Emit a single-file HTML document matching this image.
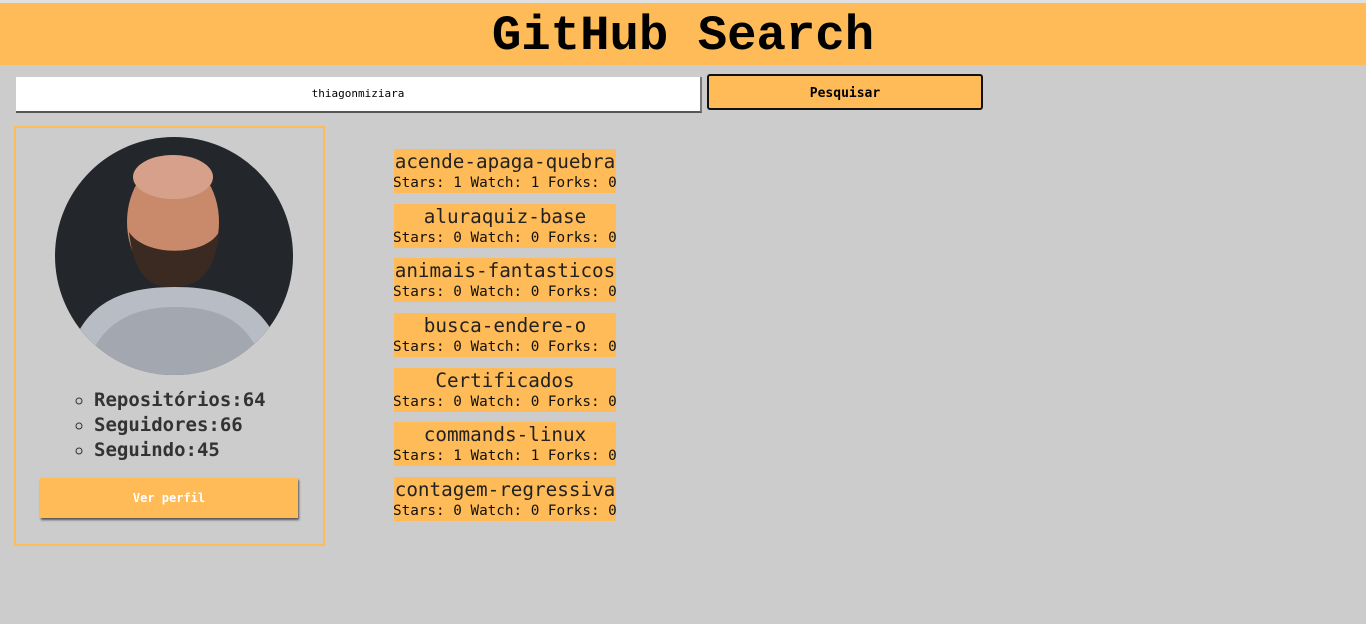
<!DOCTYPE html>
<html><head><meta charset="utf-8"><style>
body{margin:0;background:#ccc;font-family:"DejaVu Sans Mono",monospace;width:1366px;height:624px;overflow:hidden;position:relative}
.top{position:absolute;left:0;top:0;width:1366px;height:3px;background:#e0e0e0}
header{position:absolute;left:0;top:3px;width:1366px;height:62px;background:#ffbb57;text-align:center;font-size:49px;font-weight:bold;line-height:66px;color:#000;font-family:"Liberation Mono",monospace}
.inp{position:absolute;left:16px;top:77px;width:686px;height:36px;background:#fff;border-bottom:2px solid #555;border-right:2px solid #777;box-sizing:border-box;text-align:center;font-size:11px;line-height:34px}
.btn{position:absolute;left:707px;top:74px;width:276px;height:36px;background:#ffbb57;border:2px solid #111;border-radius:3px;box-sizing:border-box;text-align:center;font-weight:bold;font-size:13px;line-height:35px}
.card{position:absolute;left:14px;top:126px;width:311px;height:420px;border:2px solid #ffbb57;box-sizing:border-box}
.av{position:absolute;left:55px;top:137px;width:238px;height:238px;border-radius:50%;background:#23272b;overflow:hidden}
ul{position:absolute;left:54px;top:388px;margin:0;padding:0 0 0 40px;list-style:circle;font-size:19px;font-weight:bold;line-height:25px;color:#333}
.vp{position:absolute;left:40px;top:478px;width:258px;height:40px;background:#ffbb57;box-shadow:1px 2px 2px #555;color:#fff;text-align:center;font-weight:bold;font-size:12px;line-height:40px}
.r{position:absolute;left:394px;width:222px;background:#ffbb57;text-align:center;color:#222}
.r b{display:block;font-weight:normal;font-size:19.3px;line-height:25px;white-space:nowrap}
.r i{display:block;font-style:normal;font-size:14.3px;line-height:19px;white-space:nowrap;color:#111;margin-left:-1px}
</style></head><body>
<div class="top"></div>
<header>GitHub Search</header>
<div class="inp">thiagonmiziara</div>
<div class="btn">Pesquisar</div>
<div class="card"></div>
<div class="av"><svg width="238" height="238">
<path d="M10 238 C20 170 60 150 120 150 C180 150 220 170 232 238Z" fill="#b8bcc4"/>
<path d="M30 238 C40 185 80 170 120 170 C165 170 200 185 210 238Z" fill="#8d929b" opacity=".5"/>
<ellipse cx="118" cy="85" rx="46" ry="62" fill="#c98a6c"/>
<path d="M74 95 C80 150 105 150 118 150 C140 150 160 140 164 95 C150 120 90 120 74 95Z" fill="#3a2a22"/>
<ellipse cx="118" cy="40" rx="40" ry="22" fill="#d7a08a"/>
</svg></div>
<ul><li>Repositórios:64</li><li>Seguidores:66</li><li>Seguindo:45</li></ul>
<div class="vp">Ver perfil</div>
<div class="r" style="top:149px"><b>acende-apaga-quebra</b><i>Stars: 1 Watch: 1 Forks: 0</i></div>
<div class="r" style="top:204px"><b>aluraquiz-base</b><i>Stars: 0 Watch: 0 Forks: 0</i></div>
<div class="r" style="top:258px"><b>animais-fantasticos</b><i>Stars: 0 Watch: 0 Forks: 0</i></div>
<div class="r" style="top:313px"><b>busca-endere-o</b><i>Stars: 0 Watch: 0 Forks: 0</i></div>
<div class="r" style="top:368px"><b>Certificados</b><i>Stars: 0 Watch: 0 Forks: 0</i></div>
<div class="r" style="top:422px"><b>commands-linux</b><i>Stars: 1 Watch: 1 Forks: 0</i></div>
<div class="r" style="top:477px"><b>contagem-regressiva</b><i>Stars: 0 Watch: 0 Forks: 0</i></div>
</body></html>
